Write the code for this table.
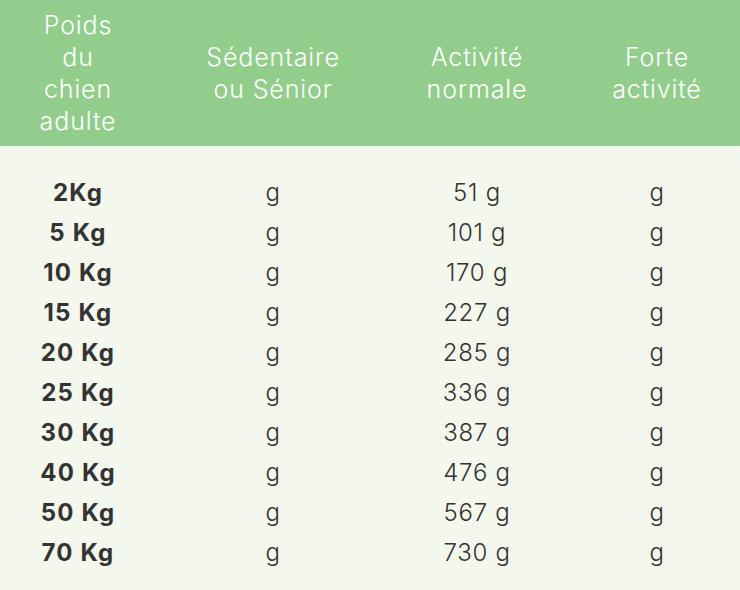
const rows = [
  ['2Kg', '51 g'],
  ['5 Kg', '101 g'],
  ['10 Kg', '170 g'],
  ['15 Kg', '227 g'],
  ['20 Kg', '285 g'],
  ['25 Kg', '336 g'],
  ['30 Kg', '387 g'],
  ['40 Kg', '476 g'],
  ['50 Kg', '567 g'],
  ['70 Kg', '730 g'],
]

const cols = 'grid grid-cols-[156px_234px_174px_176px]'

export default function App() {
  return (
    <div
      className="w-[740px] h-[590px] overflow-hidden bg-[#f4f8ec]"
      style={{ fontFamily: 'Inter, "DejaVu Sans", sans-serif' }}
    >
      <div className={`${cols} h-[146px] items-center bg-[#92cd8c] text-white text-[25px] leading-[32px] font-light tracking-[0.035em]`}>
        <div className="text-center">
          Poids<br />du<br />chien<br />adulte
        </div>
        <div className="text-center">
          Sédentaire<br />ou Sénior
        </div>
        <div className="text-center">
          Activité<br />normale
        </div>
        <div className="text-center pl-[10px]">
          Forte<br />activité
        </div>
      </div>
      <div className="pt-[27px] text-[#333333] text-[24px] leading-[40px]">
        {rows.map(([kg, val]) => (
          <div key={kg} className={cols}>
            <div className="text-center font-bold tracking-[0.05em]">{kg}</div>
            <div className="text-center font-light tracking-[0.03em]">g</div>
            <div className="text-center font-light tracking-[0.03em]">{val}</div>
            <div className="text-center font-light tracking-[0.03em] pl-[10px]">g</div>
          </div>
        ))}
      </div>
    </div>
  )
}
